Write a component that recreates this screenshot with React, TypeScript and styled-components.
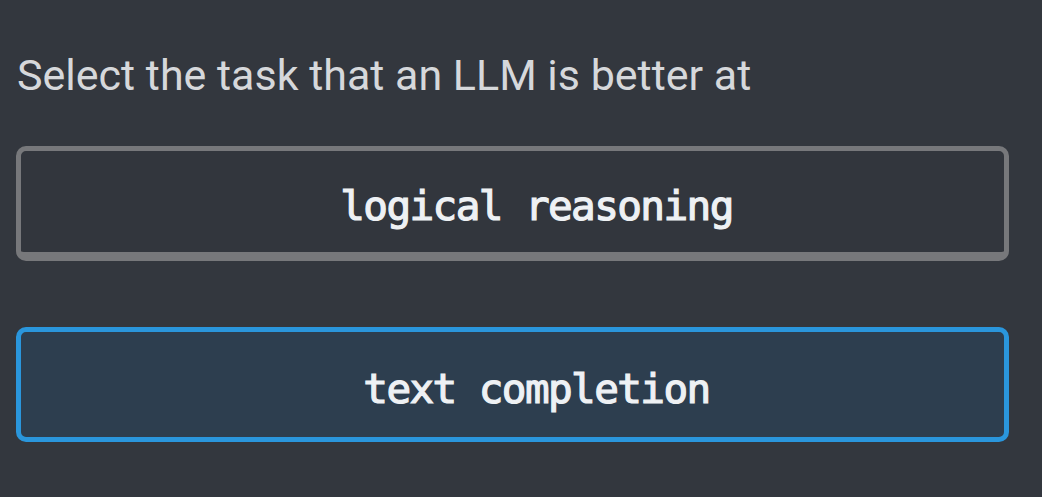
import React, { useState } from "react";
import styled, { createGlobalStyle } from "styled-components";

const GlobalStyle = createGlobalStyle`
    html, body {
        margin: 0;
        padding: 0;
        background: #33373e;
    }
`;

const Page = styled.div`
    width: 1042px;
    height: 497px;
    box-sizing: border-box;
    padding: 51px 33px 0 16px;
    background: #33373e;
`;

const Question = styled.h2`
    margin: 0 0 47px 1px;
    font-family: Roboto, "Liberation Sans", sans-serif;
    font-weight: 400;
    font-size: 43px;
    line-height: 48px;
    color: #d6d8db;
`;

const Options = styled.div`
    display: flex;
    flex-direction: column;
    gap: 66px;
`;

const Option = styled.button<{ selected: boolean }>`
    display: flex;
    align-items: center;
    justify-content: center;
    height: 115px;
    width: 100%;
    box-sizing: border-box;
    padding: 8px 0 0 48px;
    border-radius: 10px;
    border: 5px solid ${(props) => (props.selected ? "#2a96dc" : "#77787b")};
    border-bottom-width: ${(props) => (props.selected ? "5px" : "9px")};
    background: ${(props) => (props.selected ? "#2d3e4f" : "#32363d")};
    color: #eef1f4;
    font-family: "DejaVu Sans Mono", "Liberation Mono", monospace;
    font-weight: 400;
    font-size: 41px;
    letter-spacing: -1.6px;
    -webkit-text-stroke: 1.2px #eef1f4;
    cursor: pointer;
`;

const options = ["logical reasoning", "text completion"];

const App: React.FC = () => {
    const [selected, setSelected] = useState(1);

    return (
        <Page>
            <GlobalStyle />
            <Question>Select the task that an LLM is better at</Question>
            <Options>
                {options.map((label, i) => (
                    <Option key={label} selected={selected === i} onClick={() => setSelected(i)}>
                        {label}
                    </Option>
                ))}
            </Options>
        </Page>
    );
};

export default App;
